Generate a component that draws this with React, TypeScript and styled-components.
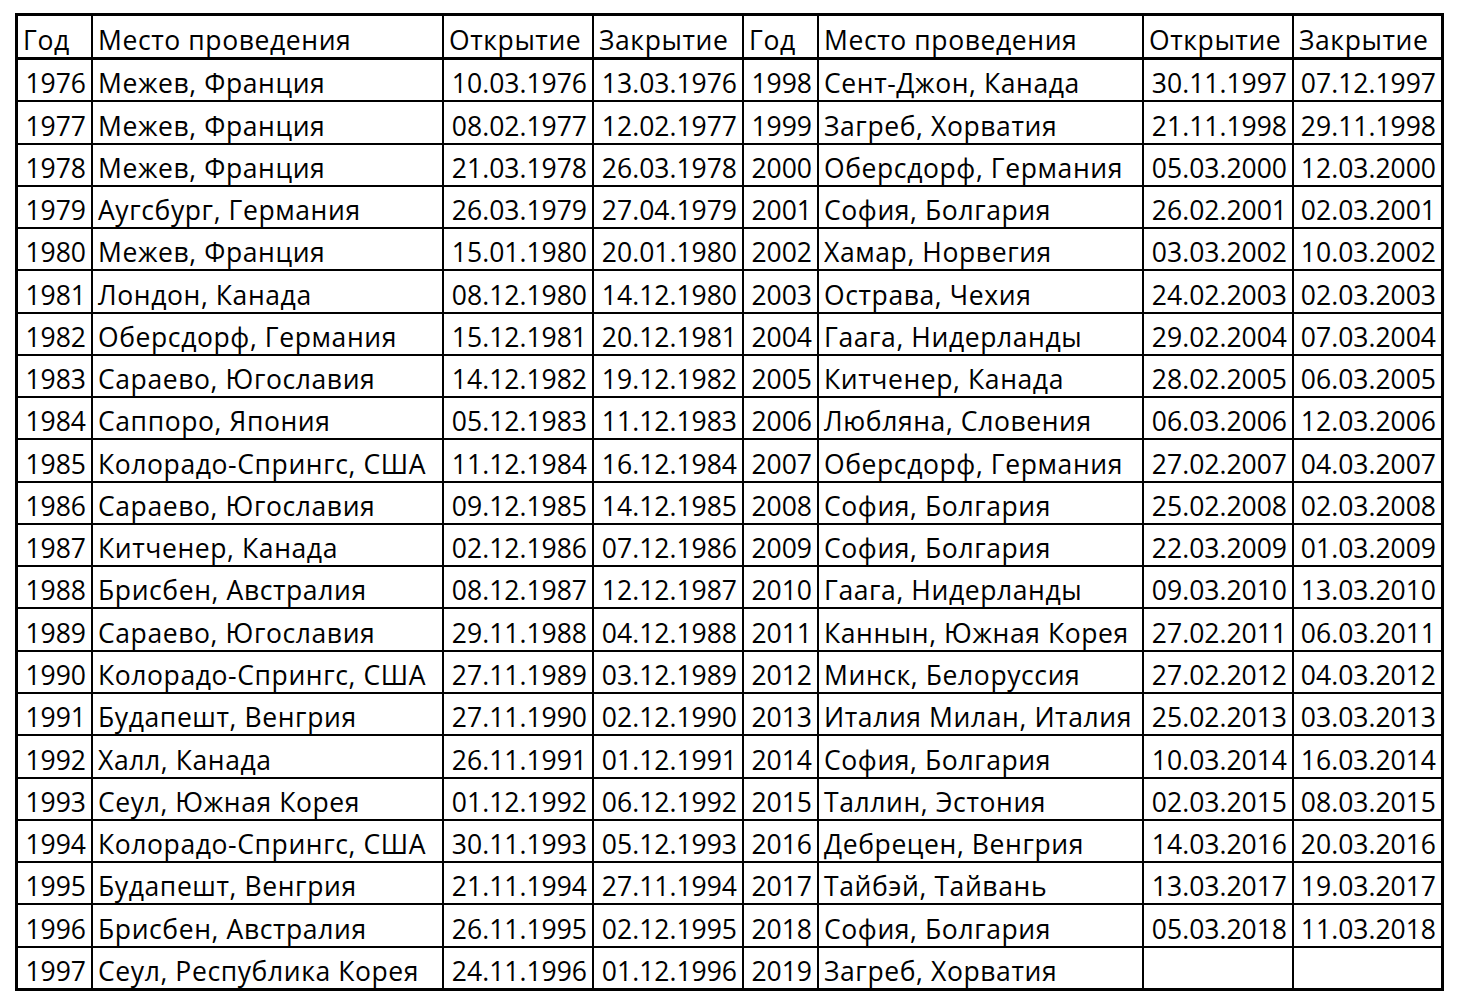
import React from "react";
import styled, { createGlobalStyle } from "styled-components";

const Global = createGlobalStyle`
  html, body { margin: 0; padding: 0; background: #ffffff; }
  body { font-family: "Open Sans", "Noto Sans", sans-serif; color: #000; }
`;

const Page = styled.div`
  padding: 13px 0 0 15px;
`;

const Sheet = styled.div`
  display: grid;
  grid-template-columns: 75px 351px 150px 150px 75px 325px 150px 147px;
  grid-template-rows: 44px repeat(21, 42.28px) 40.28px;
  width: max-content;
  border: 3px solid #000;
`;

type Align = "left" | "right";

const Cell = styled.div<{ $align: Align; $head?: boolean; $lastCol?: boolean; $lastRow?: boolean }>`
  box-sizing: border-box;
  display: flex;
  align-items: flex-end;
  justify-content: ${(p) => (p.$align === "right" ? "flex-end" : "flex-start")};
  padding: 0 ${(p) => (p.$align === "right" ? "5px" : "0")} 0
    ${(p) => (p.$align === "left" ? "5px" : "0")};
  border-right: ${(p) => (p.$lastCol ? "none" : "2px solid #000")};
  border-bottom: ${(p) => (p.$lastRow ? "none" : p.$head ? "3px solid #000" : "2px solid #000")};
  font-family: "Open Sans", "Noto Sans", sans-serif;
  font-size: 26.5px;
  letter-spacing: ${(p) => (p.$align === "left" ? "0.6px" : "0")};
  line-height: 34px;
  color: #000;
  white-space: nowrap;
  overflow: hidden;
`;

const headers = ["Год", "Место проведения", "Открытие", "Закрытие", "Год", "Место проведения", "Открытие", "Закрытие"];

const rows: string[][] = [
  ["1976", "Межев, Франция", "10.03.1976", "13.03.1976", "1998", "Сент-Джон, Канада", "30.11.1997", "07.12.1997"],
  ["1977", "Межев, Франция", "08.02.1977", "12.02.1977", "1999", "Загреб, Хорватия", "21.11.1998", "29.11.1998"],
  ["1978", "Межев, Франция", "21.03.1978", "26.03.1978", "2000", "Оберсдорф, Германия", "05.03.2000", "12.03.2000"],
  ["1979", "Аугсбург, Германия", "26.03.1979", "27.04.1979", "2001", "София, Болгария", "26.02.2001", "02.03.2001"],
  ["1980", "Межев, Франция", "15.01.1980", "20.01.1980", "2002", "Хамар, Норвегия", "03.03.2002", "10.03.2002"],
  ["1981", "Лондон, Канада", "08.12.1980", "14.12.1980", "2003", "Острава, Чехия", "24.02.2003", "02.03.2003"],
  ["1982", "Оберсдорф, Германия", "15.12.1981", "20.12.1981", "2004", "Гаага, Нидерланды", "29.02.2004", "07.03.2004"],
  ["1983", "Сараево, Югославия", "14.12.1982", "19.12.1982", "2005", "Китченер, Канада", "28.02.2005", "06.03.2005"],
  ["1984", "Саппоро, Япония", "05.12.1983", "11.12.1983", "2006", "Любляна, Словения", "06.03.2006", "12.03.2006"],
  ["1985", "Колорадо-Спрингс, США", "11.12.1984", "16.12.1984", "2007", "Оберсдорф, Германия", "27.02.2007", "04.03.2007"],
  ["1986", "Сараево, Югославия", "09.12.1985", "14.12.1985", "2008", "София, Болгария", "25.02.2008", "02.03.2008"],
  ["1987", "Китченер, Канада", "02.12.1986", "07.12.1986", "2009", "София, Болгария", "22.03.2009", "01.03.2009"],
  ["1988", "Брисбен, Австралия", "08.12.1987", "12.12.1987", "2010", "Гаага, Нидерланды", "09.03.2010", "13.03.2010"],
  ["1989", "Сараево, Югославия", "29.11.1988", "04.12.1988", "2011", "Каннын, Южная Корея", "27.02.2011", "06.03.2011"],
  ["1990", "Колорадо-Спрингс, США", "27.11.1989", "03.12.1989", "2012", "Минск, Белоруссия", "27.02.2012", "04.03.2012"],
  ["1991", "Будапешт, Венгрия", "27.11.1990", "02.12.1990", "2013", "Италия Милан, Италия", "25.02.2013", "03.03.2013"],
  ["1992", "Халл, Канада", "26.11.1991", "01.12.1991", "2014", "София, Болгария", "10.03.2014", "16.03.2014"],
  ["1993", "Сеул, Южная Корея", "01.12.1992", "06.12.1992", "2015", "Таллин, Эстония", "02.03.2015", "08.03.2015"],
  ["1994", "Колорадо-Спрингс, США", "30.11.1993", "05.12.1993", "2016", "Дебрецен, Венгрия", "14.03.2016", "20.03.2016"],
  ["1995", "Будапешт, Венгрия", "21.11.1994", "27.11.1994", "2017", "Тайбэй, Тайвань", "13.03.2017", "19.03.2017"],
  ["1996", "Брисбен, Австралия", "26.11.1995", "02.12.1995", "2018", "София, Болгария", "05.03.2018", "11.03.2018"],
  ["1997", "Сеул, Республика Корея", "24.11.1996", "01.12.1996", "2019", "Загреб, Хорватия", "", ""],
];

const alignFor = (col: number): Align => (col % 4 === 1 ? "left" : "right");

export default function App() {
  return (
    <Page>
      <Global />
      <Sheet>
        {headers.map((h, c) => (
          <Cell key={`h${c}`} $align="left" $head $lastCol={c === 7}>
            {h}
          </Cell>
        ))}
        {rows.map((r, ri) =>
          r.map((v, c) => (
            <Cell
              key={`${ri}-${c}`}
              $align={alignFor(c)}
              $lastCol={c === 7}
              $lastRow={ri === rows.length - 1}
            >
              {v}
            </Cell>
          ))
        )}
      </Sheet>
    </Page>
  );
}
